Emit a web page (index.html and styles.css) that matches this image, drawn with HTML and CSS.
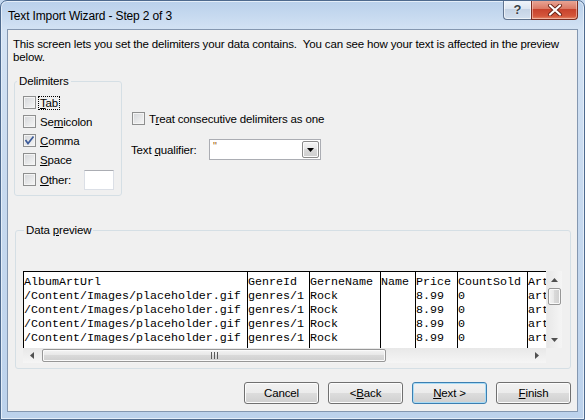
FILE: index.html
```html
<!DOCTYPE html>
<html><head><title>Text Import Wizard - Step 2 of 3</title>
<link rel="stylesheet" href="styles.css">
</head>
<body>
<div class="window">
  <div class="titlebar">
    <span class="title">Text Import Wizard - Step 2 of 3</span>
    <div class="caption">
      <span class="help">?</span>
      <span class="close">
        <svg width="16" height="12" viewBox="0 0 16 12">
          <path d="M3 1.5 L13 10.5 M13 1.5 L3 10.5" stroke="#6a2418" stroke-width="4" stroke-linecap="round"/>
          <path d="M3 1.5 L13 10.5 M13 1.5 L3 10.5" stroke="#fff" stroke-width="2.2" stroke-linecap="round"/>
        </svg>
      </span>
    </div>
  </div>

  <div class="client">
    <p class="intro">This screen lets you set the delimiters your data contains.&nbsp; You can see how your text is affected in the preview<br>below.</p>

    <div class="options">
      <fieldset class="group delims">
        <legend>Delimiters</legend>
        <div class="chk-row"><span class="chk"></span><span class="focus"><u>T</u>ab</span></div>
        <div class="chk-row"><span class="chk"></span><span>Se<u>m</u>icolon</span></div>
        <div class="chk-row"><span class="chk checked">
          <svg width="11" height="11" viewBox="0 0 11 11"><path d="M1.5 5 L4 8.5 L9.5 1.5" fill="none" stroke="#3d5b99" stroke-width="1.7"/></svg>
        </span><span><u>C</u>omma</span></div>
        <div class="chk-row"><span class="chk"></span><span><u>S</u>pace</span></div>
        <div class="chk-row other"><span class="chk"></span><span class="other-label"><u>O</u>ther:</span><span class="textbox"></span></div>
      </fieldset>

      <div class="side">
        <div class="chk-row treat"><span class="chk"></span><span>T<u>r</u>eat consecutive delimiters as one</span></div>
        <div class="qualifier">
          <span class="qual-label">Text <u>q</u>ualifier:</span>
          <div class="combo">
            <span class="combo-val">"</span>
            <span class="combo-btn"><svg width="7" height="4" viewBox="0 0 7 4"><polygon points="0,0 7,0 3.5,4" fill="#000"/></svg></span>
          </div>
        </div>
      </div>
    </div>

    <fieldset class="group preview">
      <legend>Data <u>p</u>review</legend>
      <div class="grid-wrap">
        <div class="grid-top">
          <div class="grid">
            <div class="col c1">AlbumArtUrl
/Content/Images/placeholder.gif
/Content/Images/placeholder.gif
/Content/Images/placeholder.gif
/Content/Images/placeholder.gif</div>
            <div class="col c2">GenreId
genres/1
genres/1
genres/1
genres/1</div>
            <div class="col c3">GerneName
Rock
Rock
Rock
Rock</div>
            <div class="col c4">Name</div>
            <div class="col c5">Price
8.99
8.99
8.99
8.99</div>
            <div class="col c6">CountSold
0
0
0
0</div>
            <div class="col c7">Art
art
art
art
art</div>
          </div>
          <div class="vscroll">
            <span class="arrow"><svg width="7" height="4" viewBox="0 0 7 4"><polygon points="0,4 3.5,0 7,4" fill="#505050"/></svg></span>
            <span class="vthumb"></span>
            <span class="track"></span>
            <span class="arrow"><svg width="7" height="4" viewBox="0 0 7 4"><polygon points="0,0 7,0 3.5,4" fill="#505050"/></svg></span>
          </div>
        </div>
        <div class="grid-bottom">
          <div class="hscroll">
            <span class="harrow"><svg width="4" height="7" viewBox="0 0 4 7"><polygon points="4,0 4,7 0,3.5" fill="#505050"/></svg></span>
            <span class="hthumb">
              <svg width="7" height="7" viewBox="0 0 7 7"><rect x="0" y="0" width="1" height="7" fill="#5a5a5a"/><rect x="3" y="0" width="1" height="7" fill="#5a5a5a"/><rect x="6" y="0" width="1" height="7" fill="#5a5a5a"/></svg>
            </span>
            <span class="track"></span>
            <span class="harrow"><svg width="4" height="7" viewBox="0 0 4 7"><polygon points="0,0 4,3.5 0,7" fill="#505050"/></svg></span>
          </div>
          <div class="corner"></div>
        </div>
      </div>
    </fieldset>

    <div class="buttons">
      <span class="btn">Cancel</span>
      <span class="btn">&lt; <u>B</u>ack</span>
      <span class="btn default"><u>N</u>ext &gt;</span>
      <span class="btn"><u>F</u>inish</span>
    </div>
  </div>
</div>
</body>
</html>
```

FILE: styles.css
```css
body {
	margin: 0;
	background: #c4d8ef;
	font-family: "Liberation Sans", Arial, sans-serif;
	font-size: 11.5px; letter-spacing: -0.15px;
	color: #000;
}
u { text-decoration: underline; text-underline-offset: 1px; }

.window {
	box-sizing: border-box;
	width: 585px; height: 420px;
	border: 1px solid #4e6a8e;
	border-radius: 7px 7px 0 0;
	background: linear-gradient(#b9d0eb, #d4e3f4 30px, #c8daef 180px, #bcd2ec);
	box-shadow: inset 0 0 0 1px #e4eef9;
	display: flex; flex-direction: column;
	overflow: hidden;
}

/* title bar */
.titlebar {
	height: 28px; flex-shrink: 0;
	display: flex; justify-content: space-between; align-items: flex-start;
}
.title { padding: 8px 0 0 7px; line-height: 14px; font-size: 12px; }
.caption { display: flex; margin: -1px 6px 0 0; }
.help, .close {
	box-sizing: border-box; height: 20px;
	display: flex; align-items: center; justify-content: center;
}
.help {
	width: 28px;
	border: 1px solid #61748f; border-top: none; border-right: none;
	border-radius: 0 0 0 4px;
	background: linear-gradient(#f2f6fb, #dde6f1 45%, #c5d3e5 50%, #d3e0ef);
	box-shadow: inset 0 0 0 1px rgba(255,255,255,0.6);
	font-weight: bold; font-size: 13px; color: #3a3f47;
	text-shadow: 0 0 2px #fff;
}
.close {
	width: 47px;
	border: 1px solid #7a2c20; border-top: none;
	border-radius: 0 0 4px 0;
	background: linear-gradient(#eaa99a, #db7a66 45%, #c8432d 50%, #d4563b 85%, #e58c6b);
	box-shadow: inset 0 0 0 1px rgba(255,220,210,0.5);
}

/* client area */
.client {
	margin: 0 6px;
	height: 383px; box-sizing: border-box; flex-shrink: 0;
	border: 1px solid #8497b0;
	background: #f0f0f0;
	display: flex; flex-direction: column; align-items: flex-start;
}
.client > * { flex-shrink: 0; }
.intro { margin: 0; padding: 8px 0 0 5px; line-height: 13px; white-space: nowrap; }

.group {
	margin: 0; min-width: 0;
	box-sizing: border-box;
	border: 1px solid #d5dfe5;
	border-radius: 3px;
}
.group legend { padding: 0 2px; line-height: 13px; }

.options { display: flex; margin: 11px 0 0 6px; }
.delims { width: 108px; padding: 5px 0 5px 0; }
.delims legend { margin-left: 2px; }
.delims .chk-row { margin-left: 8px; }

.chk-row { display: flex; align-items: center; height: 19px; }
.chk {
	box-sizing: border-box;
	width: 13px; height: 13px; margin-right: 4px; flex-shrink: 0;
	border: 1px solid #8e8f8f;
	background: linear-gradient(135deg, #d4d6d9, #f6f6f6);
	box-shadow: inset 0 0 0 1px #f4f4f4;
	display: flex; align-items: center; justify-content: center;
}
.focus { border: 1px dotted #000; padding: 0 1px; margin-left: -2px; line-height: 12px; }
.other { height: 21px; }
.other-label { width: 44px; }
.textbox {
	box-sizing: border-box; width: 30px; height: 20px;
	background: #fff;
	border: 1px solid #dbdfe6; border-top-color: #abadb3;
}

.side { margin-left: 9px; }
.treat { margin: 34px 0 0 1px; }
.qualifier { display: flex; align-items: center; margin-top: 11px; height: 21px; }
.qual-label { width: 78px; }
.combo {
	box-sizing: border-box; width: 112px; height: 21px;
	border: 1px solid #abadb3; background: #fff;
	display: flex; align-items: center; justify-content: space-between;
	padding: 0 1px 0 3px;
}
.combo-val { color: #a0600e; font-size: 11px; align-self: flex-start; line-height: 12px; }
.combo-btn {
	box-sizing: border-box; width: 17px; height: 17px;
	border: 1px solid #8a8a8a; border-radius: 2px;
	background: linear-gradient(#f4f4f4, #e6e6e6 50%, #d8d8d8 50%, #cecece);
	box-shadow: inset 0 0 0 1px #fbfbfb;
	display: flex; align-items: center; justify-content: center;
}

/* data preview */
.preview {
	width: 556px; height: 145px;
	margin: 28px 0 0 7px;
	padding: 34px 0 0 7px;
}
.preview legend { margin-left: 1px; }
.grid-wrap { width: 539px; }
.grid-top { display: flex; width: 539px; height: 77px; }
.grid {
	width: 523px; flex: none; box-sizing: border-box;
	display: flex; overflow: hidden;
	background: #fff;
	border-top: 1px solid #000;
	font-family: "Liberation Mono", "Courier New", monospace;
	font-size: 11.67px; line-height: 14px; letter-spacing: 0;
}
.col {
	flex: none; box-sizing: border-box;
	border-left: 1px solid #000;
	padding-top: 3px;
	white-space: pre;
	overflow: hidden;
}
.c1 { width: 224px; }
.c2 { width: 62px; }
.c3 { width: 71px; }
.c4 { width: 35px; }
.c5 { width: 42px; }
.c6 { width: 70px; }
.c7 { width: 19px; }

.vscroll {
	width: 16px; flex: none; box-sizing: border-box;
	display: flex; flex-direction: column;
	background: linear-gradient(to right, #e8e8e8, #f5f5f5);
	border-left: 1px solid #ececec;
}
.arrow { height: 17px; flex: none; display: flex; align-items: center; justify-content: center; }
.harrow { width: 18px; flex: none; display: flex; align-items: center; justify-content: center; }
.track { flex: 1; }
.vthumb {
	height: 17px; margin: 0 1px;
	box-sizing: border-box;
	border: 1px solid #979797; border-radius: 2px;
	background: linear-gradient(to right, #f4f4f4, #e6e6e6 50%, #d9d9d9 50%, #cfcfcf);
	box-shadow: inset 0 0 0 1px #fafafa;
}
.grid-bottom { display: flex; width: 539px; height: 15px; }
.hscroll {
	width: 523px; flex: none; display: flex;
	background: linear-gradient(#e8e8e8, #f5f5f5);
}
.hthumb {
	width: 344px; flex: none; margin: 1px 0 1px 1px;
	box-sizing: border-box;
	border: 1px solid #979797; border-radius: 2px;
	background: linear-gradient(#f4f4f4, #e6e6e6 50%, #d9d9d9 50%, #cfcfcf);
	box-shadow: inset 0 0 0 1px #fafafa;
	display: flex; align-items: center; justify-content: center;
}
.corner { width: 16px; flex: none; background: #f0f0f0; }

/* buttons */
.buttons {
	display: flex; justify-content: flex-end; gap: 9px;
	align-self: stretch;
	margin-top: 13px; padding-right: 6px;
}
.btn {
	box-sizing: border-box; width: 75px; height: 22px;
	border: 1px solid #707070; border-radius: 3px;
	background: linear-gradient(#f2f2f2, #ebebeb 50%, #dddddd 50%, #cfcfcf);
	box-shadow: inset 0 0 0 1px #fcfcfc;
	display: flex; align-items: center; justify-content: center;
}
.btn.default {
	border-color: #3c7fb1;
	box-shadow: inset 0 0 0 1px #a9dcf6;
}
```
